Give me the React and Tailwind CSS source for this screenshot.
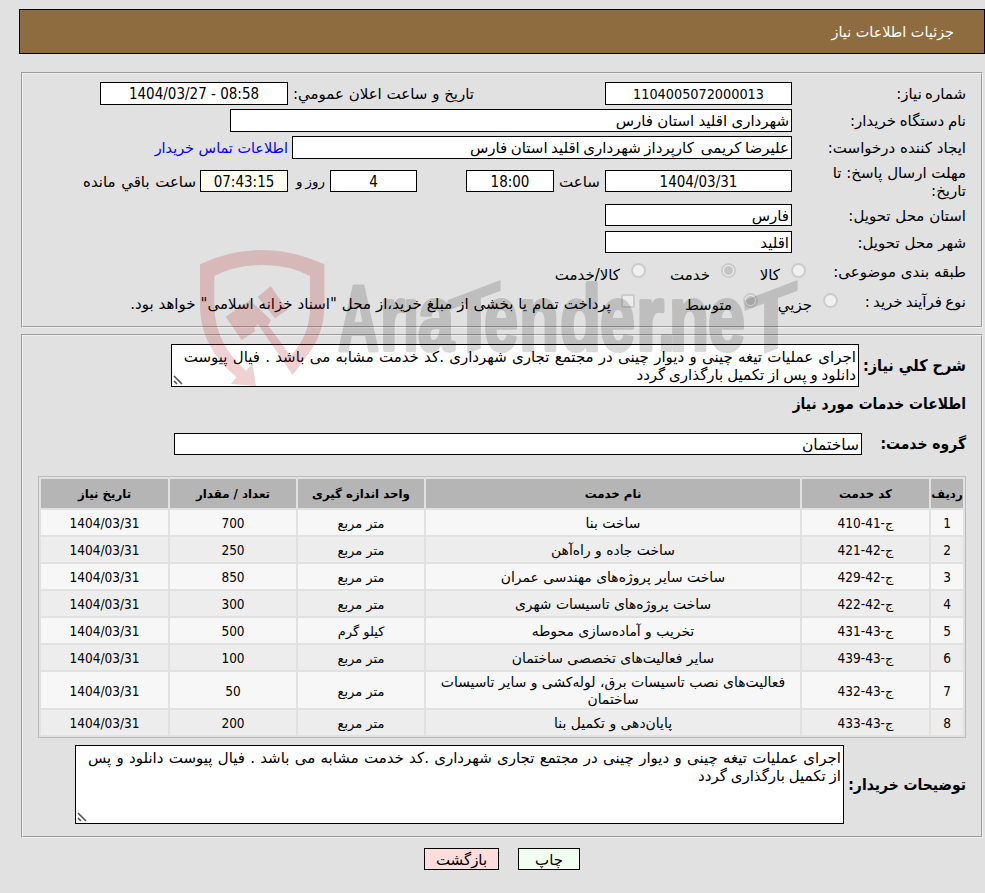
import clsx from "clsx";

const DESCRIPTION = [
  "اجرای عملیات تیغه چینی و دیوار چینی در مجتمع تجاری شهرداری .کد خدمت مشابه می باشد . فیال پیوست",
  "دانلود و پس از تکمیل بارگذاری گردد",
];

const BUYER_NOTES = [
  "اجرای عملیات تیغه چینی و دیوار چینی در مجتمع تجاری شهرداری .کد خدمت مشابه می باشد . فیال پیوست دانلود و پس",
  "از تکمیل بارگذاری گردد",
];

const COLUMNS = ["ردیف", "کد خدمت", "نام خدمت", "واحد اندازه گیری", "تعداد / مقدار", "تاریخ نیاز"];

const SERVICES = [
  { code: "410-41", name: ["ساخت بنا"], unit: "متر مربع", qty: "700" },
  { code: "421-42", name: ["ساخت جاده و راه‌آهن"], unit: "متر مربع", qty: "250" },
  { code: "429-42", name: ["ساخت سایر پروژه‌های مهندسی عمران"], unit: "متر مربع", qty: "850" },
  { code: "422-42", name: ["ساخت پروژه‌های تاسیسات شهری"], unit: "متر مربع", qty: "300" },
  { code: "431-43", name: ["تخریب و آماده‌سازی محوطه"], unit: "کیلو گرم", qty: "500" },
  { code: "439-43", name: ["سایر فعالیت‌های تخصصی ساختمان"], unit: "متر مربع", qty: "100" },
  { code: "432-43", name: ["فعالیت‌های نصب تاسیسات برق، لوله‌کشی و سایر تاسیسات", "ساختمان"], unit: "متر مربع", qty: "50" },
  { code: "433-43", name: ["پایان‌دهی و تکمیل بنا"], unit: "متر مربع", qty: "200" },
];

// letter, x, width
const LETTERS = [
  ["A", 338, 41],
  ["r", 380, 25],
  ["ı", 403, 16],
  ["a", 418, 36],
  ["e", 484, 34],
  ["n", 519, 40],
  ["d", 560, 41],
  ["e", 600, 35],
  ["r", 636, 28],
  [".", 658, 17],
  ["n", 669, 40],
  ["e", 708, 37],
];

function Watermark() {
  return (
    <svg className="absolute left-0 top-0 pointer-events-none" width="985" height="893" viewBox="0 0 985 893" direction="ltr">
      <g opacity="0.2" fill="#b4191e" transform="translate(190 240) scale(0.33333)">
        <path d="M30 73 Q120 30 217 30 Q310 30 403 73 V205 Q402 275 362 332 L308 405 L204 253 L193 262 L195 274 L155 300 L107 230 L145 204 L180 181 L243 240 L234 256 L302 348 Q360 285 360 205 V108 Q300 75 217 75 Q135 75 73 108 V205 Q78 315 168 392 L187 370 L198 438 L122 432 L140 412 Q34 325 30 205 Z" />
        <path d="M203 171 L242 138 L292 209 L255 235 Z" />
      </g>
      <g opacity="0.15" fill="#000" stroke="#000" strokeWidth="4" strokeLinejoin="round" className="font-['Liberation_Sans',sans-serif] font-bold" fontSize="92">
        {LETTERS.map(([ch, x, w]) => (
          <text key={x} x={x} y="350" textLength={w} lengthAdjust="spacingAndGlyphs">{ch}</text>
        ))}
        <g strokeWidth="1">
          <text transform="matrix(1 -0.38 0 0.95 447 361)" textLength="54" lengthAdjust="spacingAndGlyphs">T</text>
          <text transform="matrix(1 -0.38 0 0.95 744 361)" textLength="54" lengthAdjust="spacingAndGlyphs">T</text>
        </g>
      </g>
    </svg>
  );
}

function Num({ children, className = "text-[15px]" }) {
  return (
    <span dir="ltr" className={clsx("font-['DejaVu_Sans_Condensed','DejaVu_Sans',sans-serif] [font-stretch:condensed]", className)}>
      {children}
    </span>
  );
}

function Field({ className, children }) {
  return <div className={clsx("shrink-0 flex items-center border border-black whitespace-pre", className)}>{children}</div>;
}

function Row({ label, className, labelClass = "w-[174px]", children }) {
  return (
    <div className={clsx("flex items-center whitespace-nowrap", className)}>
      <div className={clsx("shrink-0", labelClass)}>{label}</div>
      {children}
    </div>
  );
}

function Radio({ checked }) {
  return (
    <span className="shrink-0 w-[15px] h-[15px] -mt-px -ml-px rounded-full border-2 border-[#cbcbcb] bg-[#f0f0f0] flex items-center justify-center">
      {checked && <span className="w-[9px] h-[9px] rounded-full bg-[#c4c4c4]" />}
    </span>
  );
}

function Option({ label, checked, className }) {
  return (
    <div className={clsx("shrink-0 flex items-center gap-3", className)}>
      <Radio checked={checked} />
      <span className="pt-[7px]">{label}</span>
    </div>
  );
}

function TextArea({ lines, className }) {
  return (
    <div className={clsx("shrink-0 relative border border-black bg-white pt-[3px] pr-[2px] leading-[18px] whitespace-nowrap", className)}>
      {lines.map((line) => (
        <p key={line} className="first:[word-spacing:0.5px] [word-spacing:-0.9px]">{line}</p>
      ))}
      <svg className="absolute left-[1px] bottom-[1px]" width="10" height="10" viewBox="0 0 10 10" stroke="#555" strokeWidth="1.7">
        <path d="M1 1 L9 9 M1 6 L4 9" />
      </svg>
    </div>
  );
}

export default function App() {
  return (
    <div dir="rtl" className="relative w-[985px] h-[893px] overflow-hidden bg-[#e1e1e1] text-black text-[15px] leading-[18px] font-['DejaVu_Sans',sans-serif] pt-[9px]">
      <header className="w-[966px] h-[45px] border border-black bg-[#8f6c40] text-white text-[14.4px] flex items-center pr-[30px]">
        جزئیات اطلاعات نیاز
      </header>

      <section className="mt-[18px] mr-[2px] w-[962px] h-[256px] border-2 [border-style:groove] border-[#f0f0f0] pr-[15px] pt-2">
        <Row label="شماره نیاز:" className="h-[23px]" labelClass="w-[174px] [word-spacing:-1.5px]">
          <Field className="w-[187px] h-[23px] justify-center bg-white"><Num className="text-[14.3px]">1104005072000013</Num></Field>
          <span className="w-[317px] pr-[131px]">تاریخ و ساعت اعلان عمومي:</span>
          <Field className="w-[188px] h-[23px] justify-center bg-white"><Num>1404/03/27 - 08:58</Num></Field>
        </Row>
        <Row label="نام دستگاه خریدار:" className="h-[23px] mt-1" labelClass="w-[174px] [word-spacing:-1px]">
          <Field className="w-[562px] h-[23px] pr-[2px] bg-white [word-spacing:-0.5px]">شهرداری اقلید استان فارس</Field>
        </Row>
        <Row label="ایجاد کننده درخواست:" className="h-[23px] mt-1">
          <Field className="w-[500px] h-[23px] pr-[2px] bg-white [word-spacing:-1.3px]">علیرضا کریمی  کارپرداز شهرداری اقلید استان فارس</Field>
          <span className="mr-1 text-[#0000ff] text-[14.4px]">اطلاعات تماس خریدار</span>
        </Row>
        <Row label={<>مهلت ارسال پاسخ: تا<br />تاریخ:</>} className="h-[36px] mt-1" labelClass="w-[174px] pt-[2px]">
          <Field className="w-[187px] h-[22px] pt-px justify-center bg-white"><Num>1404/03/31</Num></Field>
          <span className="w-[51px] pt-[2px] text-center">ساعت</span>
          <Field className="w-[88px] h-[22px] pt-px justify-center bg-white"><Num>18:00</Num></Field>
          <Field className="w-[87px] h-[22px] pt-px justify-center mr-[49px] bg-white"><Num>4</Num></Field>
          <span className="w-[42px] pr-[5px] pt-[2px] [word-spacing:-1px] text-[13.4px]">روز و</span>
          <Field className="w-[88px] h-[22px] pt-px justify-center bg-[#fffff0]"><Num>07:43:15</Num></Field>
          <span className="mr-1 pt-[2px] [word-spacing:0.8px]">ساعت باقي مانده</span>
        </Row>
        <Row label="استان محل تحویل:" className="h-[22px] mt-[5px]" labelClass="w-[174px] pt-[2px]">
          <Field className="w-[187px] h-[22px] pr-[2px] pt-[2px] bg-white">فارس</Field>
        </Row>
        <Row label="شهر محل تحویل:" className="h-[22px] mt-[5px]" labelClass="w-[174px] pt-[2px]">
          <Field className="w-[187px] h-[22px] pr-[2px] pt-[2px] bg-white">اقلید</Field>
        </Row>
        <Row label="طبقه بندی موضوعی:" className="h-[22px] mt-[7px]" labelClass="w-[160px] pt-[2px]">
          <Option className="w-[70px]" label="کالا" />
          <Option className="w-[90px]" label="خدمت" checked />
          <Option label="کالا/خدمت" />
        </Row>
        <Row label="نوع فرآیند خرید :" className="h-[22px] mt-2" labelClass="w-[128px] pt-[2px] [word-spacing:-1.6px]">
          <Option className="w-[80px]" label="جزیي" />
          <Option className="w-[123px]" label="متوسط" checked />
          <span className="shrink-0 w-[14px] h-[14px] rounded-[2px] border-2 border-[#cbcbcb] bg-[#ececec]" />
          <span className="mr-[10px] pt-[5px] [word-spacing:0.2px]">پرداخت تمام یا بخشی از مبلغ خرید،از محل "اسناد خزانه اسلامی" خواهد بود.</span>
        </Row>
      </section>

      <section className="mt-[6px] mr-[2px] w-[962px] h-[504px] border-2 [border-style:groove] border-[#f0f0f0] pr-[15px] pt-2">
        <Row label="شرح کلي نیاز:" className="h-[43px]" labelClass="w-[107px] font-bold [font-stretch:condensed] font-['DejaVu_Sans_Condensed','DejaVu_Sans',sans-serif] text-[16px]">
          <TextArea lines={DESCRIPTION} className="w-[688px] h-[43px]" />
        </Row>
        <h2 className="mt-2 h-[18px] font-bold [font-stretch:condensed] font-['DejaVu_Sans_Condensed','DejaVu_Sans',sans-serif] text-[15.4px]">اطلاعات خدمات مورد نیاز</h2>
        <Row label="گروه خدمت:" className="h-[22px] mt-5" labelClass="w-[104px] font-bold [font-stretch:condensed] font-['DejaVu_Sans_Condensed','DejaVu_Sans',sans-serif] text-[15.5px]">
          <Field className="w-[688px] h-[22px] pr-[2px] pt-px bg-white text-[15.5px]">ساختمان</Field>
        </Row>

        <div className="mt-[21px] w-[928px] border border-[#bcbcbc] p-[2px] text-[13px] text-center whitespace-nowrap">
          <div className="grid grid-cols-[32px_127px_374px_126px_126px_127px] grid-rows-[29px_25px_25px_25px_25px_25px_25px_36px_25px] gap-[2px] leading-[17px]">
            {COLUMNS.map((c) => (
              <div key={c} className="flex items-center justify-center bg-[#b5b5b5] font-bold text-[11.8px] pt-px">{c}</div>
            ))}
            {SERVICES.map((s, i) => {
              const cell = clsx("flex flex-col items-center justify-center pt-[2px]", i % 2 ? "bg-[#ededed]" : "bg-[#f7f7f7]");
              return (
                <div key={s.code} className="contents">
                  <div className={cell}><Num className="text-[13.5px]">{i + 1}</Num></div>
                  <div className={cell}><span dir="ltr"><Num className="text-[13.5px]">{s.code}-</Num>ج</span></div>
                  <div className={clsx(cell, "text-[13.9px]")}>{s.name.map((n) => <p key={n}>{n}</p>)}</div>
                  <div className={cell}>{s.unit}</div>
                  <div className={cell}><Num className="text-[13.5px]">{s.qty}</Num></div>
                  <div className={cell}><Num className="text-[13.5px]">1404/03/31</Num></div>
                </div>
              );
            })}
          </div>
        </div>

        <Row label="توضیحات خریدار:" className="h-[79px] mt-[7px]" labelClass="w-[122px] font-bold [font-stretch:condensed] font-['DejaVu_Sans_Condensed','DejaVu_Sans',sans-serif] text-[15.5px]">
          <TextArea lines={BUYER_NOTES} className="w-[769px] h-[79px]" />
        </Row>
      </section>

      <footer className="mt-[10px] mr-[405px] flex gap-[19px]">
        <button className="w-[62px] h-[22px] pt-px border border-black bg-[#f0fff0] leading-[18px]">چاپ</button>
        <button className="w-[75px] h-[22px] pt-px border border-black bg-[#ffdddd] leading-[18px]">بازگشت</button>
      </footer>

      <Watermark />
    </div>
  );
}
